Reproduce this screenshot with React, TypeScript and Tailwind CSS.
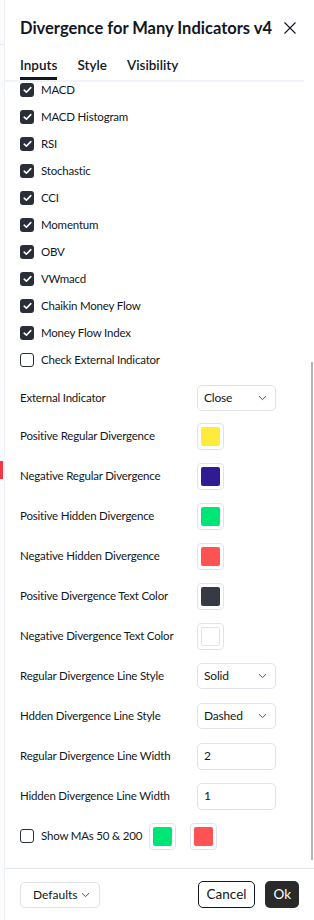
const checks = [
  { label: 'MACD', on: true },
  { label: 'MACD Histogram', on: true },
  { label: 'RSI', on: true },
  { label: 'Stochastic', on: true },
  { label: 'CCI', on: true },
  { label: 'Momentum', on: true },
  { label: 'OBV', on: true },
  { label: 'VWmacd', on: true },
  { label: 'Chaikin Money Flow', on: true },
  { label: 'Money Flow Index', on: true },
  { label: 'Check External Indicator', on: false },
]

type Row =
  | { label: string; kind: 'select'; value: string }
  | { label: string; kind: 'color'; color: string }
  | { label: string; kind: 'input'; value: string }

const rows: Row[] = [
  { label: 'External Indicator', kind: 'select', value: 'Close' },
  { label: 'Positive Regular Divergence', kind: 'color', color: 'bg-[#ffeb3b]' },
  { label: 'Negative Regular Divergence', kind: 'color', color: 'bg-[#311b92]' },
  { label: 'Positive Hidden Divergence', kind: 'color', color: 'bg-[#00e676]' },
  { label: 'Negative Hidden Divergence', kind: 'color', color: 'bg-[#ff5252]' },
  { label: 'Positive Divergence Text Color', kind: 'color', color: 'bg-[#363a45]' },
  { label: 'Negative Divergence Text Color', kind: 'color', color: 'bg-white' },
  { label: 'Regular Divergence Line Style', kind: 'select', value: 'Solid' },
  { label: 'Hdden Divergence Line Style', kind: 'select', value: 'Dashed' },
  { label: 'Regular Divergence Line Width', kind: 'input', value: '2' },
  { label: 'Hidden Divergence Line Width', kind: 'input', value: '1' },
]

const Box = ({ on }: { on: boolean }) =>
  on ? (
    <span className="flex h-[14px] w-[14px] shrink-0 items-center justify-center rounded-[3px] bg-[#2a2e39]">
      <svg width="9" height="8" viewBox="0 0 9 8" fill="none">
        <path d="M1.2 4.2 L3.4 6.2 L7.8 1.6" stroke="white" strokeWidth="1.6" strokeLinecap="round" strokeLinejoin="round" />
      </svg>
    </span>
  ) : (
    <span className="h-[14px] w-[14px] shrink-0 rounded-[3px] border border-[#2a2e39] bg-white"></span>
  )

const Chevron = () => (
  <svg width="9" height="6" viewBox="0 0 9 6" fill="none">
    <path d="M1 1.2 L4.5 4.6 L8 1.2" stroke="#50535e" strokeWidth="1" />
  </svg>
)

const Swatch = ({ color }: { color: string }) => (
  <div className="flex h-[27px] w-[27px] items-center justify-center rounded-[4px] border border-[#e0e3eb] bg-white">
    <div className={`h-[19px] w-[19px] rounded-[2px] ${color} ${color === 'bg-white' ? 'border border-[#e0e3eb]' : ''}`}></div>
  </div>
)

const App = () => {
  return (
    <div className="flex h-[920px] w-[314px] overflow-hidden bg-white font-['Lato','Liberation_Sans',sans-serif] text-[#131722]">
      <div className="flex w-[4px] shrink-0 flex-col bg-[#fafbfd]">
        <div className="mt-[44px] h-px bg-[#e8eaee]"></div>
        <div className="mt-[416px] h-[18px] w-[3px] bg-[#f23645]"></div>
      </div>
      <div className="relative flex flex-1 flex-col border-l border-[#eef0f3]">
        <div className="flex h-[55px] items-center justify-between pl-[15px] pr-[18px] pt-[1px]">
          <h1 className="text-[16.5px] font-bold">Divergence for Many Indicators v4</h1>
          <svg width="12" height="12" viewBox="0 0 12 12" fill="none">
            <path d="M0.5 0.5 L11.5 11.5 M11.5 0.5 L0.5 11.5" stroke="#131722" strokeWidth="1.1" />
          </svg>
        </div>
        <div className="mr-[10px] flex gap-[20px] border-b-2 border-[#f0f3fa] pl-[15px]">
          {['Inputs', 'Style', 'Visibility'].map((t, i) => (
            <div key={t} className={`pb-[2px] text-[13.5px] leading-[20px] font-semibold ${i === 0 ? 'border-b-[3px] border-[#131722]' : 'border-b-[3px] border-transparent'}`}>
              {t}
            </div>
          ))}
        </div>
        <div className="flex flex-col pl-[15px] text-[11.5px] tracking-[-0.2px]">
          {checks.map((c) => (
            <div key={c.label} className="flex h-[27px] items-start gap-[7px] pt-[1px]">
              <Box on={c.on} />
              <span className="leading-[14px]">{c.label}</span>
            </div>
          ))}
          {rows.map((r, i) => (
            <div key={r.label} className={`flex items-center ${i === 0 ? 'h-[37px]' : 'h-[40px]'}`}>
              <span className="w-[177px]">{r.label}</span>
              {r.kind === 'color' && <Swatch color={r.color} />}
              {r.kind === 'select' && (
                <div className="flex h-[26px] w-[79px] items-center justify-between rounded-[5px] border border-[#e0e3eb] pl-[6px] pr-[8px] text-[12px]">
                  <span>{r.value}</span>
                  <Chevron />
                </div>
              )}
              {r.kind === 'input' && (
                <div className="flex h-[27px] w-[79px] items-center rounded-[5px] border border-[#e0e3eb] pl-[6px] text-[12px]">
                  {r.value}
                </div>
              )}
            </div>
          ))}
          <div className="flex h-[40px] items-center">
            <Box on={false} />
            <span className="ml-[7px] w-[108px] whitespace-nowrap">Show MAs 50 &amp; 200</span>
            <Swatch color="bg-[#00e676]" />
            <div className="ml-[14px]">
              <Swatch color="bg-[#ff5252]" />
            </div>
          </div>
        </div>
        <div className="mt-auto flex h-[52px] items-center justify-between border-t border-[#e0e3eb] pl-[15px] pr-[15px]">
          <div className="flex h-[26px] w-[80px] items-center justify-between rounded-[5px] border border-[#e0e3eb] pl-[12px] pr-[9px] text-[12px]">
            <span>Defaults</span>
            <Chevron />
          </div>
          <div className="flex items-center gap-[10px]">
            <button className="h-[27px] rounded-[5px] border border-[#131722] px-[8px] text-[13.5px]">Cancel</button>
            <button className="h-[27px] rounded-[5px] bg-[#2a2a2a] px-[8px] text-[13.5px] text-white">Ok</button>
          </div>
        </div>
        <div className="absolute right-[1px] top-[362px] h-[498px] w-[2px] bg-[#b2b5be]"></div>
      </div>
    </div>
  )
}

export default App
